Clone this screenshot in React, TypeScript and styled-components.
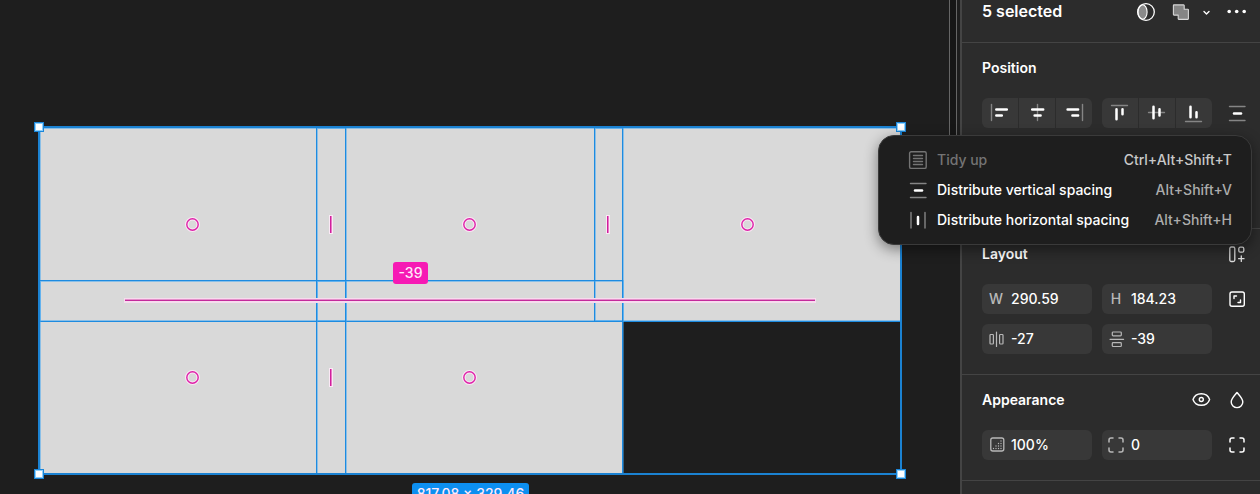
import React from "react";
import styled, { createGlobalStyle } from "styled-components";

const GlobalStyle = createGlobalStyle`
  *, *::before, *::after { box-sizing: border-box; }
  body { margin: 0; background: #1e1e1e; }
  button, input { font: inherit; color: inherit; }
`;

const Page = styled.div`
  display: flex;
  height: 100vh;
  overflow: hidden;
  background: #1e1e1e;
  color: #fff;
  font: 450 14px/20px Inter, "Liberation Sans", sans-serif;
`;

/* ---------- canvas ---------- */

const Canvas = styled.main`
  position: relative;
  flex: 1;
  min-width: 0;
  overflow: hidden;
`;

type Spot = { $x: number; $y: number };

const Tile = styled.div<Spot>`
  position: absolute;
  left: ${(p) => p.$x}px;
  top: ${(p) => p.$y}px;
  width: 307px;
  height: 195px;
  background: #d9d9d9;
`;

const TileOutline = styled.div<Spot>`
  position: absolute;
  left: ${(p) => p.$x}px;
  top: ${(p) => p.$y}px;
  width: 307px;
  height: 195px;
  border: 1px solid #1d8be0;
  box-shadow: 1px 0 0 rgba(60, 165, 245, 0.5), inset 1px 1px 0 rgba(60, 165, 245, 0.5),
    inset 0 -1px 0 rgba(60, 165, 245, 0.5);
`;

const Selection = styled.div`
  position: absolute;
  left: 38px;
  top: 126px;
  width: 864px;
  height: 349px;
  border: 2px solid #1b82d2;
`;

const Handle = styled.span<Spot>`
  position: absolute;
  left: ${(p) => p.$x}px;
  top: ${(p) => p.$y}px;
  width: 10px;
  height: 10px;
  border: 1px solid #1b86d9;
  background: #fff;
  box-shadow: inset 0 0 0 1px #8fd0fb;
`;

const Ring = styled.svg<Spot>`
  position: absolute;
  left: ${(p) => p.$x}px;
  top: ${(p) => p.$y}px;
  width: 17px;
  height: 17px;
  fill: none;
`;

const GapBar = styled.span<Spot>`
  position: absolute;
  left: ${(p) => p.$x}px;
  top: ${(p) => p.$y}px;
  width: 4px;
  height: 19px;
  border: 1px solid #fbe8f5;
  background: linear-gradient(90deg, #d01f9c 50%, #e879c6 50%);
`;

const GapLine = styled.span`
  position: absolute;
  left: 124px;
  top: 298px;
  width: 692px;
  height: 5px;
  border: 1px solid #f6dcee;
  border-bottom-width: 2px;
  background: linear-gradient(#e48fca 50%, #c3299b 50%);
`;

const Badge = styled.span<Spot & { $color: string; $w: number }>`
  position: absolute;
  left: ${(p) => p.$x}px;
  top: ${(p) => p.$y}px;
  width: ${(p) => p.$w}px;
  height: 22px;
  border-radius: 3px;
  background: ${(p) => p.$color};
  line-height: 22px;
  text-align: center;
  white-space: nowrap;
  color: #ffe9fa;
`;

const Divider = styled.div`
  position: absolute;
  top: 0;
  right: 3px;
  width: 8px;
  height: 150px;
  border: solid #666;
  border-width: 0 1px;
  background: #171717;
`;

/* ---------- side panel ---------- */

const Panel = styled.aside`
  position: relative;
  flex: none;
  width: 300px;
  border-left: 2px solid #444;
  background: #2c2c2c;
`;

const Header = styled.header`
  display: flex;
  align-items: center;
  gap: 6px;
  height: 43px;
  padding: 0 8px 18px 20px;
  border-bottom: 1px solid #444;
`;

const HeaderTitle = styled.h1`
  flex: 1;
  margin: 0;
  padding-bottom: 2px;
  font-size: 16px;
  font-weight: 600;
`;

const Section = styled.section<{ $tail?: number }>`
  padding: 0 8px ${(p) => p.$tail ?? 20}px 20px;
  border-bottom: 1px solid #444;
`;

const SectionHead = styled.div`
  display: flex;
  align-items: center;
  gap: 6px;
  height: 50px;
  margin-bottom: 5px;
`;

const SectionTitle = styled.h2`
  flex: 1;
  margin: 0;
  font-size: 14px;
  font-weight: 600;
`;

const Rows = styled.div`
  display: grid;
  grid-template-columns: minmax(0, 1fr) minmax(0, 1fr) 30px;
  gap: 10px;
`;

const IconButton = styled.button<{ $w?: number }>`
  display: flex;
  align-items: center;
  justify-content: center;
  flex: none;
  width: ${(p) => p.$w ?? 30}px;
  height: 30px;
  padding: 0;
  border: 0;
  background: none;
`;

const Split = styled.div`
  display: flex;
  height: 24px;
  align-items: center;
`;

const Segments = styled.div`
  display: flex;
  gap: 1px;
  overflow: hidden;
  border-radius: 6px;
`;

const Segment = styled.button`
  display: flex;
  flex: 1;
  align-items: center;
  justify-content: center;
  height: 30px;
  padding: 0;
  border: 0;
  background: #383838;
`;

const FieldBox = styled.label`
  display: flex;
  align-items: center;
  height: 30px;
  border-radius: 6px;
  background: #383838;
`;

const FieldMark = styled.span`
  display: flex;
  flex: none;
  justify-content: center;
  width: 28px;
  color: #b8b8b8;
`;

const FieldInput = styled.input`
  flex: 1;
  min-width: 0;
  height: 30px;
  padding: 0 0 2px 1px;
  border: 0;
  outline: 0;
  background: none;
  font-weight: 500;
`;

/* ---------- menu ---------- */

const Menu = styled.ul`
  position: absolute;
  top: 135px;
  right: 8px;
  width: 374px;
  margin: 0;
  padding: 9px 0;
  list-style: none;
  border: 1px solid #3a3a3a;
  border-radius: 16px;
  background: #1e1e1e;
  box-shadow: 0 4px 14px rgba(0, 0, 0, 0.45);
`;

const MenuItem = styled.button`
  display: flex;
  align-items: center;
  gap: 7px;
  width: 100%;
  height: 30px;
  padding: 0 19px 0 27px;
  border: 0;
  background: none;
  text-align: left;
  white-space: nowrap;
  &:disabled { color: #747474; }
`;

const MenuLabel = styled.span`
  flex: 1;
`;

const Shortcut = styled.kbd<{ $bright?: boolean }>`
  font: inherit;
  color: ${(p) => (p.$bright ? "#c8c8c8" : "#acacac")};
`;

/* ---------- icons ---------- */

const Svg = styled.svg`
  display: block;
  width: 24px;
  height: 24px;
  flex: none;
  fill: none;
  stroke: currentColor;
  stroke-linecap: round;
  stroke-linejoin: round;
`;

const Icon = ({ children }: { children: React.ReactNode }) => (
  <Svg viewBox="0 0 24 24" aria-hidden="true">{children}</Svg>
);

const Guided = ({ guide, bars, width = 2.5 }: { guide: string; bars: string; width?: number }) => (
  <Icon>
    <path d={guide} stroke="#858585" strokeWidth="1.4" />
    <path d={bars} stroke="#fff" strokeWidth={width} />
  </Icon>
);

const DistributeV = () => <Guided guide="M4.5 5.5h15.5M4.5 19.5h15.5" bars="M9 12.5h7" />;
const DistributeH = () => <Guided guide="M5 4.5v15.5M19 4.5v15.5" bars="M12 9v7" />;

const horizontalAligns = [
  { name: "Align left", guide: "M3.5 3.5v16", bars: "M8.3 8.5h10.5M8.3 14.5h5.5" },
  { name: "Align horizontal centers", guide: "M12.5 3.5v16", bars: "M7.2 8.5h11M9.6 14.5h6" },
  { name: "Align right", guide: "M20.5 3.5v16", bars: "M5.6 8.5h10.5M10.4 14.5h5.7" },
];

const verticalAligns = [
  { name: "Align top", guide: "M3.5 4.5h16", bars: "M8.5 8.3v10M14.5 8.3v5" },
  { name: "Align vertical centers", guide: "M3.5 11.5h16", bars: "M8.5 5.7v11.6M14.5 8.3v6.2" },
  { name: "Align bottom", guide: "M3.5 20.5h16", bars: "M8.5 5.7v10.5M14.5 11.2v5" },
];

const Corners = () => (
  <Icon>
    <path
      strokeWidth="1.5"
      d="M5 9V7a2 2 0 0 1 2-2h2M15 5h2a2 2 0 0 1 2 2v2M19 15v2a2 2 0 0 1-2 2h-2M9 19H7a2 2 0 0 1-2-2v-2"
    />
  </Icon>
);

const AlignGroup = ({ items }: { items: typeof horizontalAligns }) => (
  <Segments>
    {items.map((item) => (
      <Segment key={item.name} aria-label={item.name}>
        <Guided guide={item.guide} bars={item.bars} />
      </Segment>
    ))}
  </Segments>
);

const Field = ({ name, mark, value }: { name: string; mark: React.ReactNode; value: string }) => (
  <FieldBox>
    <FieldMark>{mark}</FieldMark>
    <FieldInput aria-label={name} defaultValue={value} />
  </FieldBox>
);

const tiles = [
  { x: 39, y: 127 },
  { x: 316, y: 127 },
  { x: 594, y: 127 },
  { x: 39, y: 280 },
  { x: 316, y: 280 },
];

const handles = [
  { x: 34, y: 122 },
  { x: 896, y: 122 },
  { x: 34, y: 469 },
  { x: 896, y: 469 },
];

const gaps = [
  { x: 329, y: 215 },
  { x: 606, y: 215 },
  { x: 329, y: 368 },
];

const dots = [
  [16, 8], [16, 10.5], [13.5, 10.5], [16, 13], [13.5, 13], [11, 13],
  [16, 15.5], [13.5, 15.5], [11, 15.5], [8.5, 15.5],
];

export default function App() {
  return (
    <Page>
      <GlobalStyle />
      <Canvas>
        {tiles.map((t) => <Tile key={`${t.x}-${t.y}`} $x={t.x} $y={t.y} />)}
        {tiles.map((t) => <TileOutline key={`${t.x}-${t.y}`} $x={t.x} $y={t.y} />)}
        <Selection />
        {handles.map((h) => <Handle key={`${h.x}-${h.y}`} $x={h.x} $y={h.y} />)}
        {tiles.map((t) => (
          <Ring key={`${t.x}-${t.y}`} $x={t.x + 145} $y={t.y + 89} viewBox="0 0 17 17">
            <circle cx="8.5" cy="8.5" r="5.7" stroke="#fbe8f5" strokeWidth="3.6" />
            <circle cx="8.5" cy="8.5" r="5.7" stroke="#dd22a8" strokeWidth="1.4" />
          </Ring>
        ))}
        {gaps.map((g) => <GapBar key={`${g.x}-${g.y}`} $x={g.x} $y={g.y} />)}
        <GapLine />
        <Badge $x={393} $y={262} $w={35} $color="#f61ab4">-39</Badge>
        <Badge $x={412} $y={483} $w={117} $color="#0d8ff0">817.08 × 329.46</Badge>
        <Divider />
      </Canvas>

      <Panel>
        <Header>
          <HeaderTitle>5 selected</HeaderTitle>
          <IconButton aria-label="Use as mask">
            <Icon>
              <ellipse cx="9.5" cy="12" rx="4.6" ry="7.2" fill="#8a8a8a" strokeWidth="1.1" />
              <circle cx="13" cy="12" r="8.3" strokeWidth="1.3" />
            </Icon>
          </IconButton>
          <Split>
            <IconButton aria-label="Union selection">
              <Icon>
                <path
                  d="M5 4.9h9.6a.6.6 0 0 1 .6.6v3.7h3.6a.6.6 0 0 1 .6.6v9a.6.6 0 0 1-.6.6h-9a.6.6 0 0 1-.6-.6v-3.7H5a.6.6 0 0 1-.6-.6v-9a.6.6 0 0 1 .6-.6z"
                  fill="#858585"
                  stroke="#d8d8d8"
                  strokeWidth="1.1"
                />
              </Icon>
            </IconButton>
            <IconButton $w={20} aria-label="Boolean operations">
              <Icon><path d="M10 11.5l2.5 2.5 2.5-2.5" strokeWidth="1.4" /></Icon>
            </IconButton>
          </Split>
          <IconButton aria-label="More actions">
            <Icon>
              <g fill="#fff" stroke="none">
                <circle cx="4.2" cy="11.5" r="1.8" />
                <circle cx="11.7" cy="11.5" r="1.8" />
                <circle cx="19.2" cy="11.5" r="1.8" />
              </g>
            </Icon>
          </IconButton>
        </Header>

        <Section $tail={100}>
          <SectionHead><SectionTitle>Position</SectionTitle></SectionHead>
          <Rows>
            <AlignGroup items={horizontalAligns} />
            <AlignGroup items={verticalAligns} />
            <IconButton aria-label="Distribute"><DistributeV /></IconButton>
          </Rows>
        </Section>

        <Section>
          <SectionHead>
            <SectionTitle>Layout</SectionTitle>
            <IconButton aria-label="Add auto layout">
              <Icon>
                <g stroke="#dcdcdc" strokeWidth="1.3">
                  <rect x="4.8" y="5" width="5" height="14.5" rx="1.5" />
                  <rect x="13.8" y="5.2" width="5" height="5" rx="1.5" />
                  <path d="M16.3 14v5.4M13.6 16.7H19" />
                </g>
              </Icon>
            </IconButton>
          </SectionHead>
          <Rows>
            <Field name="Width" mark="W" value="290.59" />
            <Field name="Height" mark="H" value="184.23" />
            <IconButton aria-label="Resize to fit">
              <Icon>
                <rect x="5" y="5" width="14.3" height="14.3" rx="2" strokeWidth="1.4" />
                <path d="M9 11.5V9h2.5M15.5 13v2.5H13" strokeWidth="1.4" />
              </Icon>
            </IconButton>
            <Field
              name="Horizontal spacing"
              value="-27"
              mark={
                <Icon>
                  <g strokeWidth="1.2">
                    <rect x="6" y="7.5" width="3.4" height="9.5" rx=".8" />
                    <rect x="15.6" y="7.5" width="3.4" height="9.5" rx=".8" />
                    <path d="M12.5 5v14.5" />
                  </g>
                </Icon>
              }
            />
            <Field
              name="Vertical spacing"
              value="-39"
              mark={
                <Icon>
                  <g strokeWidth="1.2">
                    <rect x="8.3" y="5" width="9" height="3.8" rx=".8" />
                    <rect x="8.3" y="15.7" width="9" height="3.8" rx=".8" />
                    <path d="M6 12.3h13.6" />
                  </g>
                </Icon>
              }
            />
          </Rows>
        </Section>

        <Section>
          <SectionHead>
            <SectionTitle>Appearance</SectionTitle>
            <IconButton aria-label="Toggle visibility">
              <Icon>
                <path
                  d="M4 11.5C5.2 8 8.6 5.7 12.3 5.7s7.1 2.3 8.3 5.8c-1.2 3.5-4.6 5.8-8.3 5.8S5.2 15 4 11.5z"
                  strokeWidth="1.4"
                />
                <circle cx="12.3" cy="11.5" r="2" strokeWidth="1.4" />
              </Icon>
            </IconButton>
            <IconButton aria-label="Blend mode">
              <Icon>
                <path d="M12 4.5C13.5 6.5 17.8 10.5 17.8 14a5.8 5.6 0 0 1-11.6 0C6.2 10.5 10.5 6.5 12 4.5z" strokeWidth="1.4" />
              </Icon>
            </IconButton>
          </SectionHead>
          <Rows>
            <Field
              name="Opacity"
              value="100%"
              mark={
                <Icon>
                  <rect x="6.8" y="5" width="13" height="13" rx="2" strokeWidth="1.3" />
                  <g fill="currentColor" stroke="none">
                    {dots.map(([x, y]) => <circle key={`${x}-${y}`} cx={x + 1} cy={y} r=".7" />)}
                  </g>
                </Icon>
              }
            />
            <Field name="Corner radius" value="0" mark={<Corners />} />
            <IconButton aria-label="Individual corners"><Corners /></IconButton>
          </Rows>
        </Section>

        <Menu>
          <li>
            <MenuItem disabled>
              <Icon>
                <rect x="3.6" y="3.8" width="16.6" height="16.6" rx="1.5" strokeWidth="1.4" />
                <path d="M7.5 7.500h9M7.500 10.500h9M7.500 13.500h9M7.500 16.500h9" strokeWidth="1.400" />
              </Icon>
              <MenuLabel>Tidy up</MenuLabel>
              <Shortcut $bright>Ctrl+Alt+Shift+T</Shortcut>
            </MenuItem>
          </li>
          <li>
            <MenuItem>
              <DistributeV />
              <MenuLabel>Distribute vertical spacing</MenuLabel>
              <Shortcut>Alt+Shift+V</Shortcut>
            </MenuItem>
          </li>
          <li>
            <MenuItem>
              <DistributeH />
              <MenuLabel>Distribute horizontal spacing</MenuLabel>
              <Shortcut>Alt+Shift+H</Shortcut>
            </MenuItem>
          </li>
        </Menu>
      </Panel>
    </Page>
  );
}
